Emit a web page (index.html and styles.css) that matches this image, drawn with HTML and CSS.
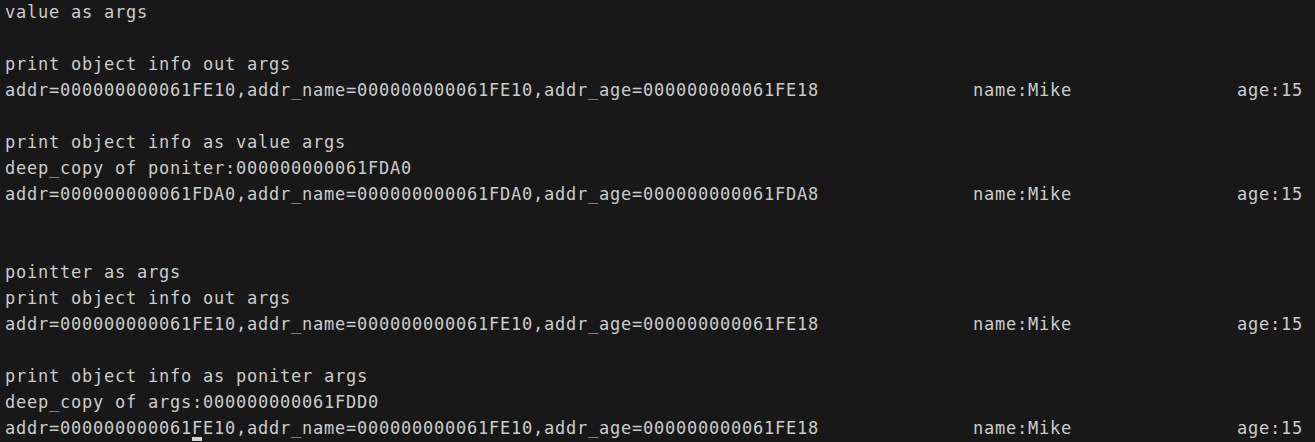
FILE: index.html
```html
<!DOCTYPE html>
<html>
<head>
<meta charset="utf-8">
<link rel="stylesheet" href="styles.css">
</head>
<body>
<div class="terminal">
<pre class="output">value as args

print object info out args
addr=000000000061FE10,addr_name=000000000061FE10,addr_age=000000000061FE18              name:Mike               age:15

print object info as value args
deep_copy of poniter:000000000061FDA0
addr=000000000061FDA0,addr_name=000000000061FDA0,addr_age=000000000061FDA8              name:Mike               age:15


pointter as args
print object info out args
addr=000000000061FE10,addr_name=000000000061FE10,addr_age=000000000061FE18              name:Mike               age:15

print object info as poniter args
deep_copy of args:000000000061FDD0
addr=000000000061FE10,addr_name=000000000061FE10,addr_age=000000000061FE18              name:Mike               age:15</pre>
<div class="cursor"></div>
</div>
</body>
</html>
```
FILE: styles.css
```css
html, body {
  margin: 0;
  padding: 0;
  background: #181818;
  height: 100%;
  overflow: hidden;
}
.terminal {
  position: relative;
  height: 442px;
  padding-left: 5px;
}
.output {
  margin: -1px 0 0 0;
  font-family: "DejaVu Sans Mono", monospace;
  font-size: 17px;
  letter-spacing: 0.766px;
  line-height: 26px;
  color: #cccccc;
  white-space: pre;
}
.cursor {
  position: absolute;
  left: 192px;
  top: 438px;
  width: 10px;
  height: 4px;
  background: #d4d4d4;
}
```
